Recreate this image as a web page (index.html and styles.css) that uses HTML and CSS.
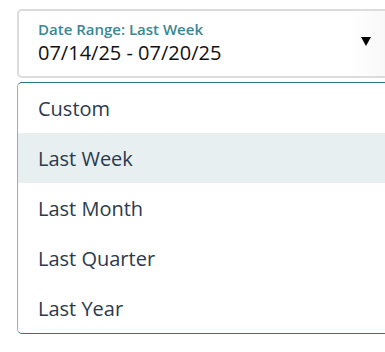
FILE: index.html
```html
<!DOCTYPE html>
<html lang="en">
<head>
    <meta charset="UTF-8">
    <meta name="viewport" content="width=device-width, initial-scale=1.0">
    <title>Date Range</title>
    <link rel="stylesheet" href="styles.css">
</head>
<body>
    <div class="picker">
        <!-- Selected value -->
        <div class="select">
            <div class="select-text">
                <span class="select-label">Date Range: Last Week</span>
                <span class="select-value">07/14/25 - 07/20/25</span>
            </div>
            <span class="select-arrow"></span>
        </div>

        <!-- Options list -->
        <ul class="options">
            <li class="option">Custom</li>
            <li class="option active">Last Week</li>
            <li class="option">Last Month</li>
            <li class="option">Last Quarter</li>
            <li class="option">Last Year</li>
        </ul>
    </div>
</body>
</html>
```

FILE: styles.css
```css
/* Reset default styles */
* {
    margin: 0;
    padding: 0;
    box-sizing: border-box;
}

body {
    font-family: "Open Sans", "Noto Sans", sans-serif;
    background-color: #fff;
    padding: 9px 0 0 17px;
    overflow: hidden;
    height: 352px;
}

.picker {
    width: 380px;
}

/* Selected value box */
.select {
    height: 69px;
    border: 2px solid #dcdcdc;
    border-radius: 5px;
    display: flex;
    align-items: center;
    justify-content: space-between;
    padding: 0 24px 2px 19px;
    background: linear-gradient(to right, #fff 88%, #f6f6f6 100%);
}

.select-text {
    display: flex;
    flex-direction: column;
}

.select-label {
    font-size: 15px;
    line-height: 21px;
    font-weight: 600;
    color: #3a8793;
}

.select-value {
    font-size: 20px;
    line-height: 26px;
    color: #111;
}

.select-arrow {
    width: 0;
    height: 0;
    border-left: 5px solid transparent;
    border-right: 5px solid transparent;
    border-top: 9px solid #000;
    margin-bottom: 2px;
}

/* Options dropdown */
.options {
    list-style: none;
    margin-top: 4px;
    border: 1px solid #2b7682;
    border-left-color: #8fb3b9;
    border-radius: 5px;
}

.option {
    height: 50px;
    display: flex;
    align-items: center;
    padding-left: 20px;
    font-size: 20px;
    color: #2b3a4d;
}

.option.active {
    background-color: #e7eff1;
}
```
